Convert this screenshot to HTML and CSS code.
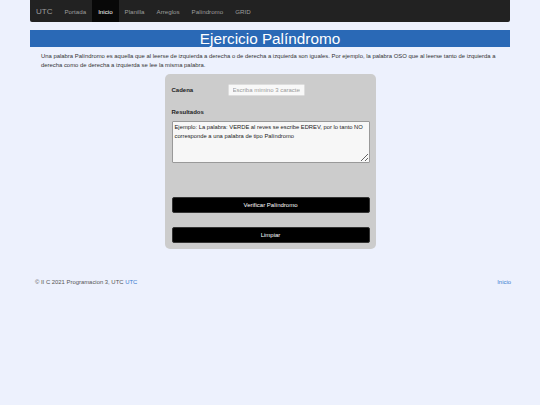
FILE: index.html
```html
<!DOCTYPE html>
<html lang="es">
<head>
<meta charset="utf-8">
<title>Ejercicio Palíndromo</title>
<link rel="stylesheet" href="styles.css">
</head>
<body>
<nav class="navbar">
  <a class="brand" href="#">UTC</a>
  <ul class="nav">
    <li><a class="nav-link" href="#">Portada</a></li>
    <li><a class="nav-link active" href="#">Inicio</a></li>
    <li><a class="nav-link" href="#">Planilla</a></li>
    <li><a class="nav-link" href="#">Arreglos</a></li>
    <li><a class="nav-link" href="#">Palíndromo</a></li>
    <li><a class="nav-link" href="#">GRID</a></li>
  </ul>
</nav>
<main class="main">
  <h1 class="title">Ejercicio Palíndromo</h1>
  <p class="intro">Una palabra Palíndromo es aquella que al leerse de izquierda a derecha o de derecha a izquierda son iguales. Por ejemplo, la palabra OSO que al leerse tanto de izquierda a derecha como de derecha a izquierda se lee la misma palabra.</p>
  <div class="card">
    <div class="row">
      <label class="label label-col" for="cadena">Cadena</label>
      <input class="input" id="cadena" type="text" placeholder="Escriba mimino 3 caracteres">
    </div>
    <label class="label label-res" for="res">Resultados</label>
    <textarea class="area" id="res">Ejemplo: La palabra: VERDE al reves se escribe EDREV, por lo tanto NO corresponde a una palabra de tipo Palíndromo</textarea>
    <button class="btn btn-first" type="button">Verificar Palíndromo</button>
    <button class="btn" type="button">Limpiar</button>
  </div>
</main>
<footer class="footer">
  <span class="copy">© II C 2021 Programacion 3, UTC <a class="link" href="#">UTC</a></span>
  <a class="link" href="#">Inicio</a>
</footer>
</body>
</html>
```
FILE: styles.css
```css
* { box-sizing: border-box; }
html, body { margin: 0; padding: 0; }
body {
  background: #edf1fd;
  font-family: "Liberation Sans", Arial, sans-serif;
  font-size: 5.9px;
  line-height: 9px;
  color: #333;
  width: 540px;
  height: 405px;
  overflow: hidden;
}
.navbar {
  margin: 0 30px;
  height: 22px;
  background: #222;
  border-radius: 0 0 2px 2px;
  display: flex;
  align-items: stretch;
  padding-left: 6px;
}
.brand {
  color: #9d9d9d;
  font-size: 8px;
  text-decoration: none;
  display: flex;
  align-items: center;
  margin-right: 6px;
}
.nav {
  list-style: none;
  margin: 0;
  padding: 0;
  display: flex;
}
.nav li { display: flex; }
.nav-link {
  display: flex;
  align-items: center;
  padding: 0 6px;
  font-size: 6.2px;
  color: #9d9d9d;
  text-decoration: none;
}
.nav-link.active {
  background: #080808;
  color: #fff;
}
.main { margin: 8px 30px 0; }
.title {
  margin: 0;
  height: 17px;
  background: #2a69b6;
  color: #fff;
  font-weight: normal;
  font-size: 15.3px;
  line-height: 17px;
  text-align: center;
}
.intro {
  margin: 5px 11px 0;
}
.card {
  width: 211px;
  margin: 3.5px auto 0;
  background: #cccccc;
  border-radius: 5px;
  padding: 10px 6px 6px 7px;
  display: flex;
  flex-direction: column;
}
.row {
  display: flex;
  align-items: center;
}
.label {
  font-weight: bold;
  color: #222;
  font-size: 6px;
}
.label-col { width: 56px; margin-top: 1px; }
.input {
  width: 77px;
  height: 12px;
  border: 0.5px solid #ddd;
  border-radius: 1.5px;
  background: #f8f8f8;
  padding: 0 4px;
  font-family: "Liberation Sans", Arial, sans-serif;
  font-size: 6px;
  color: #333;
}
.input::placeholder { color: #999; }
.label-res { margin-top: 12px; }
.area {
  margin-top: 4px;
  width: 198px;
  height: 42px;
  background: #f7f7f7;
  border: 0.5px solid #999;
  border-radius: 1px;
  padding: 1px 2px;
  font-family: "Liberation Sans", Arial, sans-serif;
  font-size: 5.8px;
  line-height: 9px;
  color: #222;
  resize: vertical;
}
.btn {
  width: 198px;
  height: 16px;
  background: #000;
  color: #fff;
  border: 0.5px solid #333;
  border-radius: 2px;
  font-family: "Liberation Sans", Arial, sans-serif;
  font-size: 6px;
  font-weight: normal;
  padding: 0;
  margin-top: 14px;
}
.btn-first { margin-top: 34px; }
.footer {
  margin: 29px 29px 0 30px;
  padding-left: 5px;
  display: flex;
  justify-content: space-between;
  color: #555;
}
.link {
  color: #3a7bd0;
  text-decoration: none;
}
```
